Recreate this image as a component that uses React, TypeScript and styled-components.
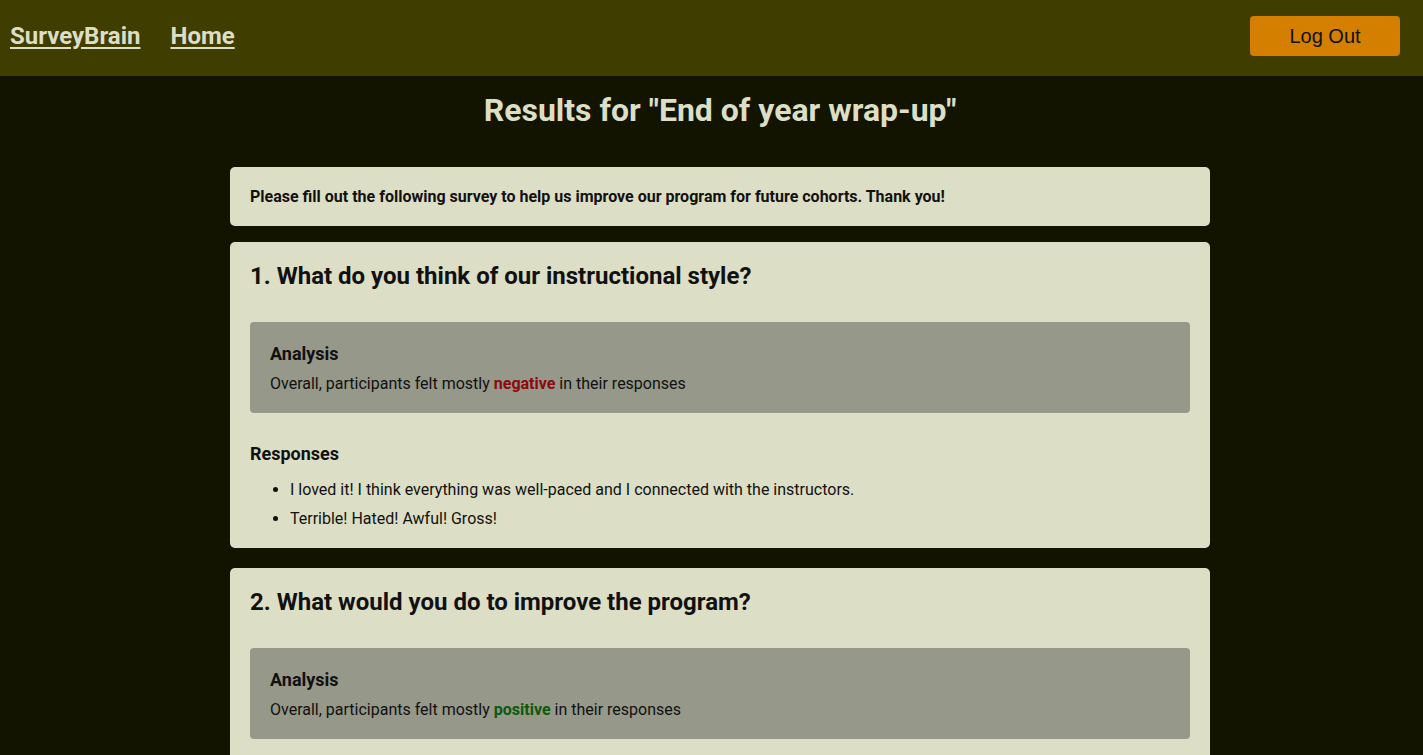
import React from 'react';
import styled, { createGlobalStyle } from 'styled-components';

const GlobalStyle = createGlobalStyle`
  html, body {
    margin: 0;
    padding: 0;
    background: #121400;
    font-family: Roboto, "Liberation Sans", Arial, sans-serif;
  }
`;

const NavBar = styled.header`
  height: 76px;
  background: #403d00;
  display: flex;
  align-items: center;
  justify-content: space-between;
  padding: 0 23px 4px 10px;
  box-sizing: border-box;
`;

const NavLinks = styled.nav`
  display: flex;
  align-items: center;
  gap: 30px;
`;

const NavLink = styled.a`
  color: #dcdec5;
  font-size: 24px;
  font-weight: 700;
  text-decoration: underline;
  text-underline-offset: 3px;
  cursor: pointer;
`;

const LogOutButton = styled.button`
  width: 150px;
  height: 40px;
  background: #d47f00;
  border: none;
  border-radius: 4px;
  color: #111;
  font-family: "Liberation Sans", Arial, sans-serif;
  font-size: 20px;
  cursor: pointer;
`;

const Page = styled.div`
  padding-left: 17px;
`;

const Main = styled.main`
  width: 980px;
  margin: 0 auto;
  padding-bottom: 40px;
`;

const PageTitle = styled.h1`
  margin: 15px 0 38px;
  text-align: center;
  color: #dcdec5;
  font-size: 32px;
  font-weight: 700;
`;

const Card = styled.section<{ $spacing?: number }>`
  background: #dcdec5;
  border-radius: 5px;
  padding: 20px;
  margin-bottom: ${(p) => p.$spacing ?? 20}px;
  color: #111;
`;

const Intro = styled.p`
  margin: 0;
  font-size: 16px;
  font-weight: 700;
`;

const Question = styled.h2`
  margin: 0 0 32px;
  font-size: 24px;
  font-weight: 700;
  line-height: 28px;
`;

const AnalysisBox = styled.div`
  background: #96988a;
  border-radius: 4px;
  padding: 21px 20px 20px;
`;

const SubHeading = styled.h3<{ $gap?: number }>`
  margin: 0 0 ${(p) => p.$gap ?? 10}px;
  font-size: 18px;
  font-weight: 700;
  line-height: 21px;
`;

const Text = styled.p`
  margin: 0;
  font-size: 16px;
  line-height: 19px;
`;

const Sentiment = styled.strong<{ $tone: 'positive' | 'negative' }>`
  color: ${(p) => (p.$tone === 'positive' ? '#0b5a0b' : '#8b0a0a')};
`;

const ResponsesSection = styled.div`
  margin-top: 30px;
`;

const ResponseList = styled.ul`
  margin: 0;
  padding-left: 40px;
`;

const ResponseItem = styled.li`
  font-size: 16px;
  line-height: 19px;
  & + & {
    margin-top: 10px;
  }
`;

type Result = {
  question: string;
  sentiment: 'positive' | 'negative';
  responses: string[];
};

const results: Result[] = [
  {
    question: 'What do you think of our instructional style?',
    sentiment: 'negative',
    responses: [
      'I loved it! I think everything was well-paced and I connected with the instructors.',
      'Terrible! Hated! Awful! Gross!',
    ],
  },
  {
    question: 'What would you do to improve the program?',
    sentiment: 'positive',
    responses: [
      'More hands-on projects and group work.',
      'Nothing, it was great!',
    ],
  },
];

const App: React.FC = () => {
  return (
    <>
      <GlobalStyle />
      <NavBar>
        <NavLinks>
          <NavLink>SurveyBrain</NavLink>
          <NavLink>Home</NavLink>
        </NavLinks>
        <LogOutButton>Log Out</LogOutButton>
      </NavBar>
      <Page>
        <Main>
          <PageTitle>Results for "End of year wrap-up"</PageTitle>
          <Card $spacing={16}>
            <Intro>
              Please fill out the following survey to help us improve our program for future cohorts. Thank you!
            </Intro>
          </Card>
          {results.map((r, i) => (
            <Card key={i}>
              <Question>
                {i + 1}. {r.question}
              </Question>
              <AnalysisBox>
                <SubHeading>Analysis</SubHeading>
                <Text>
                  Overall, participants felt mostly <Sentiment $tone={r.sentiment}>{r.sentiment}</Sentiment> in
                  their responses
                </Text>
              </AnalysisBox>
              <ResponsesSection>
                <SubHeading $gap={16}>Responses</SubHeading>
                <ResponseList>
                  {r.responses.map((text, j) => (
                    <ResponseItem key={j}>{text}</ResponseItem>
                  ))}
                </ResponseList>
              </ResponsesSection>
            </Card>
          ))}
        </Main>
      </Page>
    </>
  );
};

export default App;
